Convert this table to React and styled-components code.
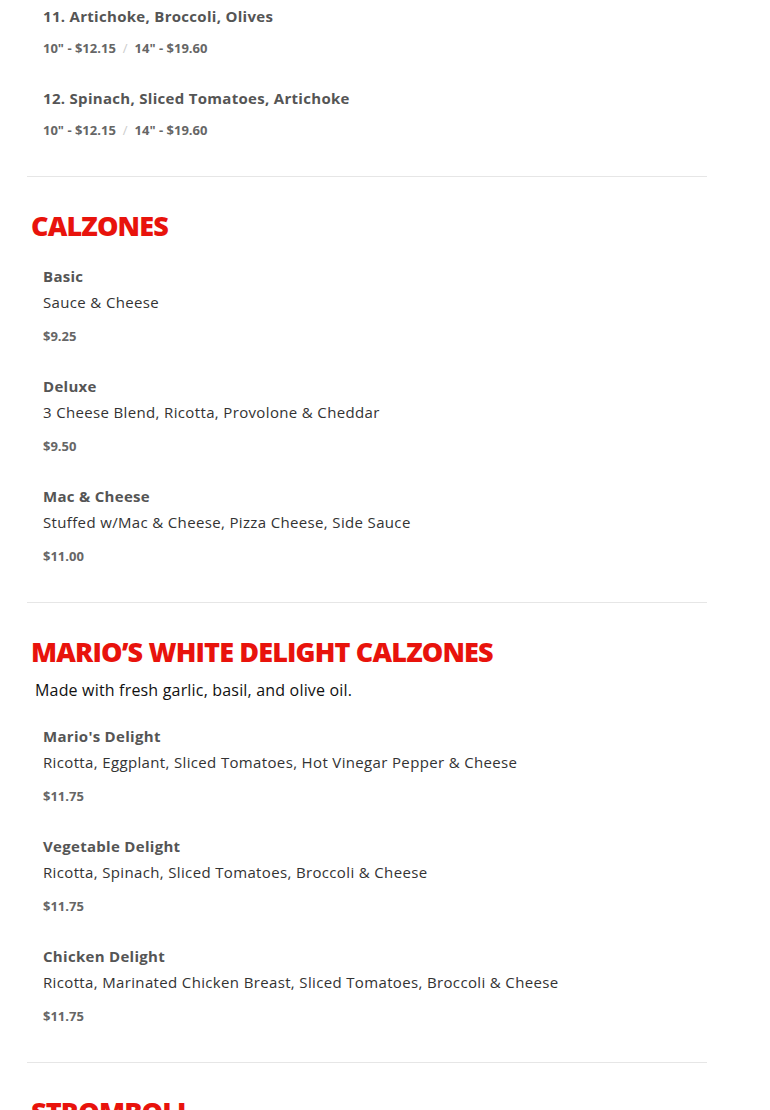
import React from 'react'
import styled, {createGlobalStyle} from 'styled-components'

const GlobalStyle = createGlobalStyle`
  body {
    margin: 0;
    background: #fff;
    font-family: "Open Sans", "Liberation Sans", sans-serif;
  }
`

const menu = [
  {
    title: null,
    items: [
      {name: '11. Artichoke, Broccoli, Olives', sizes: ['10" - $12.15', '14" - $19.60']},
      {name: '12. Spinach, Sliced Tomatoes, Artichoke', sizes: ['10" - $12.15', '14" - $19.60']},
    ],
  },
  {
    title: 'CALZONES',
    items: [
      {name: 'Basic', desc: 'Sauce & Cheese', price: '$9.25'},
      {name: 'Deluxe', desc: '3 Cheese Blend, Ricotta, Provolone & Cheddar', price: '$9.50'},
      {name: 'Mac & Cheese', desc: 'Stuffed w/Mac & Cheese, Pizza Cheese, Side Sauce', price: '$11.00'},
    ],
  },
  {
    title: 'MARIO’S WHITE DELIGHT CALZONES',
    note: 'Made with fresh garlic, basil, and olive oil.',
    items: [
      {name: "Mario's Delight", desc: 'Ricotta, Eggplant, Sliced Tomatoes, Hot Vinegar Pepper & Cheese', price: '$11.75'},
      {name: 'Vegetable Delight', desc: 'Ricotta, Spinach, Sliced Tomatoes, Broccoli & Cheese', price: '$11.75'},
      {name: 'Chicken Delight', desc: 'Ricotta, Marinated Chicken Breast, Sliced Tomatoes, Broccoli & Cheese', price: '$11.75'},
    ],
  },
  {
    title: 'STROMBOLI',
    items: [
      {name: 'Basic', desc: 'Sauce & Cheese', price: '$9.25'},
    ],
  },
]

export default function App() {
  return (
    <Page>
      <GlobalStyle />
      {menu.map((section, i) => (
        <Section key={i} $first={!section.title}>
          {section.title ? <Heading>{section.title}</Heading> : null}
          {section.note ? <Note>{section.note}</Note> : null}
          <List $top={!section.title ? 4 : section.note ? 22 : 18}>
            {section.items.map((item) => (
              <Item key={item.name}>
                <Name>{item.name}</Name>
                {item.desc ? <Desc>{item.desc}</Desc> : null}
                <Price $tight={!item.desc}>
                  {item.sizes ? (
                    item.sizes.map((s, j) => (
                      <React.Fragment key={s}>
                        {j > 0 ? <Slash>/</Slash> : null}
                        {s}
                      </React.Fragment>
                    ))
                  ) : item.price}
                </Price>
              </Item>
            ))}
          </List>
        </Section>
      ))}
    </Page>
  )
}

const Page = styled.div`
  width: 680px;
  padding-left: 27px;
  height: 1110px;
  overflow: hidden;
`

const Section = styled.section`
  padding-top: ${({$first}) => ($first ? '0' : '29px')};
  padding-bottom: 8px;
  border-bottom: 1px solid #e6e6e6;
`

const Heading = styled.h2`
  margin: 0 0 0 4px;
  font-size: 27px;
  line-height: 40px;
  font-weight: 800;
  color: #e8130c;
  letter-spacing: -0.85px;
`

const Note = styled.p`
  margin: 6px 0 0 8px;
  font-size: 16px;
  line-height: 24px;
  color: #111;
  letter-spacing: 0.18px;
`

const List = styled.div`
  padding-top: ${({$top}) => $top}px;
  padding-left: 16px;
`

const Item = styled.div`
  margin-bottom: 28px;
`

const Name = styled.div`
  font-size: 15px;
  line-height: 24px;
  font-weight: 700;
  color: #555;
  letter-spacing: 0.3px;
`

const Desc = styled.div`
  margin-top: 2px;
  font-size: 15px;
  line-height: 24px;
  color: #333;
  letter-spacing: 0.35px;
`

const Price = styled.div`
  margin-top: ${({$tight}) => ($tight ? '10px' : '12px')};
  font-size: 13px;
  line-height: 20px;
  font-weight: 700;
  color: #666;
`

const Slash = styled.span`
  margin: 0 7px;
  color: #ccc;
  font-weight: 400;
`
